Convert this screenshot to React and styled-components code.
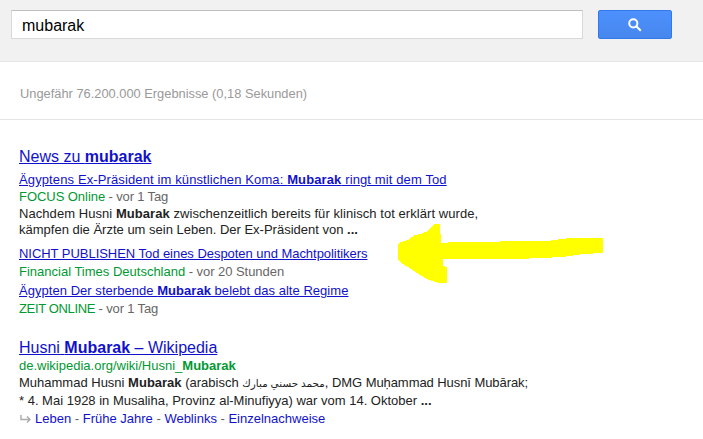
import React from 'react'
import styled, { createGlobalStyle } from 'styled-components'

const GlobalStyle = createGlobalStyle`
  html, body {
    margin: 0;
    padding: 0;
    background: #fff;
    overflow: hidden;
  }
  body {
    font-family: "Liberation Sans", Arial, "DejaVu Sans", sans-serif;
    font-size: 13px;
    color: #222;
  }
`

const Page = styled.div`
  position: relative;
  width: 703px;
  height: 439px;
  overflow: hidden;
`

const Header = styled.header`
  display: flex;
  gap: 15px;
  height: 62px;
  padding: 10px 0 0 11px;
  box-sizing: border-box;
  background: #f1f1f1;
  border-bottom: 1px solid #e5e5e5;
`

const SearchBox = styled.div`
  width: 572px;
  height: 29px;
  box-sizing: border-box;
  padding-left: 10px;
  background: #fff;
  border: 1px solid #d9d9d9;
  border-top-color: #c0c0c0;
  font-size: 16px;
  line-height: 30px;
  color: #000;
`

const SearchButton = styled.div`
  display: flex;
  align-items: center;
  justify-content: center;
  width: 74px;
  height: 29px;
  box-sizing: border-box;
  background: linear-gradient(#4d90fe, #4787ed);
  border: 1px solid #3079ed;
  border-radius: 2px;
`

const Stats = styled.div`
  height: 58px;
  box-sizing: border-box;
  padding: 24px 0 0 20px;
  border-bottom: 1px solid #e5e5e5;
  line-height: 16px;
  color: #999;
  font-size: 12.85px;
`

const Results = styled.main`
  padding: 27px 0 0 19px;
`

const Block = styled.section`
  margin-bottom: ${(p) => p.$gap || 0}px;
`

const Title = styled.a`
  display: block;
  font-size: 16px;
  line-height: ${(p) => p.$h || 20}px;
  color: #1111cc;
  text-decoration: underline;
`

const Link = styled.a`
  color: #1111cc;
  text-decoration: ${(p) => (p.$plain ? 'none' : 'underline')};
`

const Row = styled.div`
  line-height: ${(p) => p.$h || 17}px;
  margin-top: ${(p) => p.$top || 0}px;
  letter-spacing: ${(p) => p.$ls || 0}px;
  white-space: nowrap;
`

const Source = styled.span`
  color: #009933;
  letter-spacing: ${(p) => p.$ls || 0}px;
`

const Age = styled.span`
  color: #666;
  letter-spacing: ${(p) => p.$ls || 0}px;
`

const Snippet = styled.div`
  margin-top: ${(p) => p.$top || 0}px;
  white-space: nowrap;
`

const SnippetLine = styled.div`
  line-height: ${(p) => p.$h || 16}px;
  letter-spacing: ${(p) => p.$ls || 0}px;
`

const Arabic = styled.span`
  font-size: 10.4px;
`

const Tail = styled.span`
  letter-spacing: -0.07px;
`

const Sitelinks = styled(Row)`
  display: flex;
  align-items: center;
  color: #666;
  white-space: pre;
`

const Arrow = styled.svg`
  position: absolute;
  left: 0;
  top: 0;
  pointer-events: none;
`

const SearchIcon = () => (
  <svg width="14" height="14" viewBox="0 0 14 14">
    <circle cx="5.3" cy="5.3" r="4.1" fill="none" stroke="#fff" strokeWidth="2" />
    <path d="M8.3 8.3 L12.8 12.8" stroke="#fff" strokeWidth="2" />
  </svg>
)

const ReturnIcon = () => (
  <svg width="16" height="12" viewBox="0 0 16 12" style={{ flex: 'none' }}>
    <path d="M2 2 V6.5 H11 M8 3.5 L11 6.5 L8 9.5" fill="none" stroke="#aaa" strokeWidth="1.4" />
  </svg>
)

const arrowPoints =
  '434,224 440,224 441,243 455,242 547,241 570,238 603,238 603,253 583,254 563,257 518,259 443,259 443,266 447,267 447,283 438,283 427,279 417,273 408,267 401,263 398,259 398,244 401,242 408,240 415,235 421,234 428,231'

const App = () => {
  return (
    <Page>
      <GlobalStyle />
      <Header>
        <SearchBox>mubarak</SearchBox>
        <SearchButton>
          <SearchIcon />
        </SearchButton>
      </Header>
      <Stats>Ungefähr 76.200.000 Ergebnisse (0,18 Sekunden)</Stats>
      <Results>
        <Block $gap={22}>
          <Title>News zu <b>mubarak</b></Title>
          <Row $top={5} $h={16} $ls={0.12}>
            <Link>Ägyptens Ex-Präsident im künstlichen Koma: <b>Mubarak</b> ringt mit dem Tod</Link>
          </Row>
          <Row><Source $ls={-0.05}>FOCUS Online</Source><Age $ls={-0.15}> - vor 1 Tag</Age></Row>
          <Snippet $top={1}>
            <SnippetLine $ls={0.06}>Nachdem Husni <b>Mubarak</b> zwischenzeitlich bereits für klinisch tot erklärt wurde,</SnippetLine>
            <SnippetLine>kämpfen die Ärzte um sein Leben. Der Ex-Präsident von <b>...</b></SnippetLine>
          </Snippet>
          <Row $top={7} $ls={-0.04}><Link>NICHT PUBLISHEN Tod eines Despoten und Machtpolitikers</Link></Row>
          <Row $top={1}><Source>Financial Times Deutschland</Source><Age $ls={-0.05}> - vor 20 Stunden</Age></Row>
          <Row $top={2} $ls={0.04}><Link>Ägypten Der sterbende <b>Mubarak</b> belebt das alte Regime</Link></Row>
          <Row $top={1}><Source $ls={-0.35}>ZEIT ONLINE</Source><Age $ls={-0.15}> - vor 1 Tag</Age></Row>
        </Block>
        <Block>
          <Title $h={18}>Husni <b>Mubarak</b> – Wikipedia</Title>
          <Row><Source>de.wikipedia.org/wiki/Husni_<b>Mubarak</b></Source></Row>
          <Snippet>
            <SnippetLine $h={17}>Muhammad Husni <b>Mubarak</b> (arabisch <Arabic dir="rtl">محمد حسني مبارك</Arabic>, <Tail>DMG Muḥammad Husnī Mubārak;</Tail></SnippetLine>
            <SnippetLine $h={17}>* 4. Mai 1928 in Musaliha, Provinz al-Minufiyya) war vom 14. Oktober <b>...</b></SnippetLine>
          </Snippet>
          <Sitelinks $top={1}>
            <ReturnIcon />
            <Link $plain>Leben</Link> - <Link $plain>Frühe Jahre</Link> - <Link $plain>Weblinks</Link> - <Link $plain>Einzelnachweise</Link>
          </Sitelinks>
        </Block>
      </Results>
      <Arrow width="703" height="439" viewBox="0 0 703 439" shapeRendering="crispEdges">
        <polygon points={arrowPoints} fill="#ffff00" />
      </Arrow>
    </Page>
  )
}

export default App
